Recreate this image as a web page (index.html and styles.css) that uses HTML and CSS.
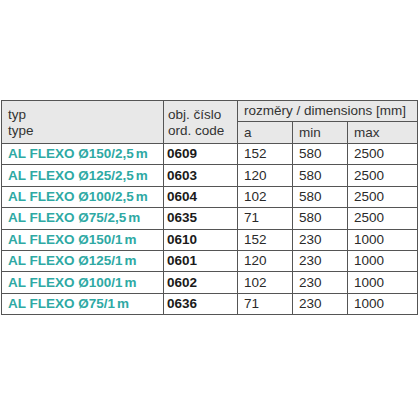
FILE: index.html
```html
<!DOCTYPE html>
<html>
<head>
<meta charset="utf-8">
<link rel="stylesheet" href="styles.css">
</head>
<body>
<table class="spec">
  <colgroup>
    <col class="c-type"><col class="c-code"><col class="c-a"><col class="c-min"><col class="c-max">
  </colgroup>
  <thead>
    <tr class="h1">
      <th rowspan="2" class="two">typ<br>type</th>
      <th rowspan="2" class="two code-h">obj. číslo<br>ord. code</th>
      <th colspan="3">rozměry / dimensions [mm]</th>
    </tr>
    <tr class="h2">
      <th>a</th><th>min</th><th>max</th>
    </tr>
  </thead>
  <tbody>
    <tr><td class="name">AL FLEXO Ø150/2,5<span class="u">m</span></td><td class="code">0609</td><td>152</td><td>580</td><td>2500</td></tr>
    <tr><td class="name">AL FLEXO Ø125/2,5<span class="u">m</span></td><td class="code">0603</td><td>120</td><td>580</td><td>2500</td></tr>
    <tr><td class="name">AL FLEXO Ø100/2,5<span class="u">m</span></td><td class="code">0604</td><td>102</td><td>580</td><td>2500</td></tr>
    <tr><td class="name">AL FLEXO Ø75/2,5<span class="u">m</span></td><td class="code">0635</td><td>71</td><td>580</td><td>2500</td></tr>
    <tr><td class="name">AL FLEXO Ø150/1<span class="u">m</span></td><td class="code">0610</td><td>152</td><td>230</td><td>1000</td></tr>
    <tr><td class="name">AL FLEXO Ø125/1<span class="u">m</span></td><td class="code">0601</td><td>120</td><td>230</td><td>1000</td></tr>
    <tr><td class="name">AL FLEXO Ø100/1<span class="u">m</span></td><td class="code">0602</td><td>102</td><td>230</td><td>1000</td></tr>
    <tr><td class="name">AL FLEXO Ø75/1<span class="u">m</span></td><td class="code">0636</td><td>71</td><td>230</td><td>1000</td></tr>
  </tbody>
</table>
</body>
</html>
```
FILE: styles.css
```css
html, body {
  margin: 0;
  padding: 0;
  background: #fff;
}
body {
  padding-top: 100px;
  padding-left: 1px;
  font-family: "Liberation Sans", Arial, Helvetica, sans-serif;
}
.spec {
  border-collapse: collapse;
  table-layout: fixed;
  width: 416px;
  font-size: 13.5px;
  color: #2a2a2a;
}
.c-type { width: 162px; }
.c-code { width: 74px; }
.c-a { width: 55px; }
.c-min { width: 55px; }
.c-max { width: 70px; }
.spec th, .spec td {
  border: 1px solid #555;
  padding: 0 0 0 6px;
  text-align: left;
  vertical-align: middle;
  white-space: nowrap;
  line-height: 16px;
}
.spec th {
  background: #e8e8e8;
  font-weight: normal;
  color: #333;
}
.h1 th { height: 20px; }
.h2 th { height: 21px; }
.spec th.two { padding-top: 1px; }
.spec th.code-h { padding-left: 4px; }
.spec tbody td { height: 20.4px; }
.spec td.name {
  color: #2ea9a4;
  font-weight: bold;
}
.spec td.code {
  font-weight: bold;
  color: #1a1a1a;
  padding-left: 3px;
}
.u { margin-left: 2px; }
```
